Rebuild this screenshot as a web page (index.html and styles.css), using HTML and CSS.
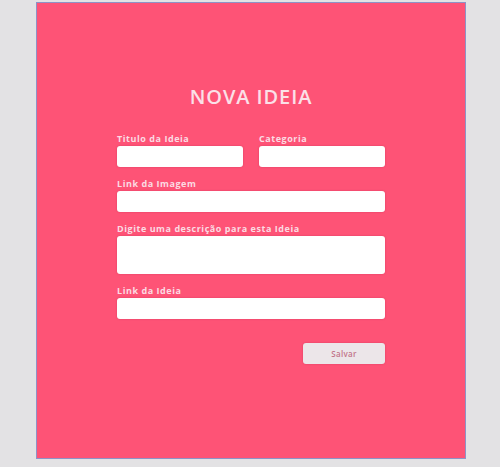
FILE: index.html
```html
<!DOCTYPE html>
<html lang="pt-BR">
<head>
<meta charset="utf-8">
<title>Nova Ideia</title>
<link rel="stylesheet" href="styles.css">
</head>
<body>
<div class="panel">
  <form class="form">
    <h1 class="title">NOVA IDEIA</h1>
    <div class="row">
      <div class="field">
        <label class="label">Titulo da Ideia</label>
        <input class="input" type="text">
      </div>
      <div class="field">
        <label class="label">Categoria</label>
        <input class="input" type="text">
      </div>
    </div>
    <div class="field">
      <label class="label">Link da Imagem</label>
      <input class="input" type="text">
    </div>
    <div class="field">
      <label class="label">Digite uma descrição para esta Ideia</label>
      <textarea class="input textarea"></textarea>
    </div>
    <div class="field">
      <label class="label">Link da Ideia</label>
      <input class="input" type="text">
    </div>
    <div class="actions">
      <button class="button" type="button">Salvar</button>
    </div>
  </form>
</div>
</body>
</html>
```
FILE: styles.css
```css
* { box-sizing: border-box; }
html, body {
  margin: 0;
  padding: 0;
  background: #e3e2e4;
  height: 467px;
  overflow: hidden;
}
body {
  padding: 2px 0 0 36px;
}
.panel {
  width: 430px;
  height: 457px;
  background: #fe5376;
  border: 1px solid #8e92c6;
  display: flex;
  justify-content: center;
  padding-top: 82px;
}
.form {
  width: 268px;
  display: flex;
  flex-direction: column;
  gap: 11px;
  font-family: "Open Sans", "Noto Sans", sans-serif;
}
.title {
  margin: 0 0 13px;
  text-align: center;
  font-size: 20px;
  line-height: 24px;
  font-weight: 600;
  color: #fbe0e8;
  letter-spacing: 0.9px;
}
.row {
  display: grid;
  grid-template-columns: minmax(0, 1fr) minmax(0, 1fr);
  column-gap: 16px;
}
.field {
  display: flex;
  flex-direction: column;
  gap: 2px;
  min-width: 0;
}
.label {
  font-size: 9px;
  line-height: 11px;
  font-weight: 700;
  color: #fbdbe3;
  letter-spacing: 0.55px;
}
.input {
  width: 100%;
  min-width: 0;
  height: 21px;
  border: none;
  border-radius: 3px;
  background: #ffffff;
  box-shadow: 0 0 2px rgba(150, 20, 60, 0.35);
  font-family: inherit;
  resize: none;
  outline: none;
  display: block;
}
.textarea {
  height: 38px;
}
.actions {
  display: flex;
  justify-content: flex-end;
  padding-top: 13px;
}
.button {
  width: 82px;
  height: 21px;
  border: none;
  border-radius: 3px;
  background: #ece6e9;
  color: #c27589;
  font-family: inherit;
  font-size: 8px;
  font-weight: 600;
  letter-spacing: 0.3px;
  box-shadow: 0 0 2px rgba(150, 20, 60, 0.35);
}
```
